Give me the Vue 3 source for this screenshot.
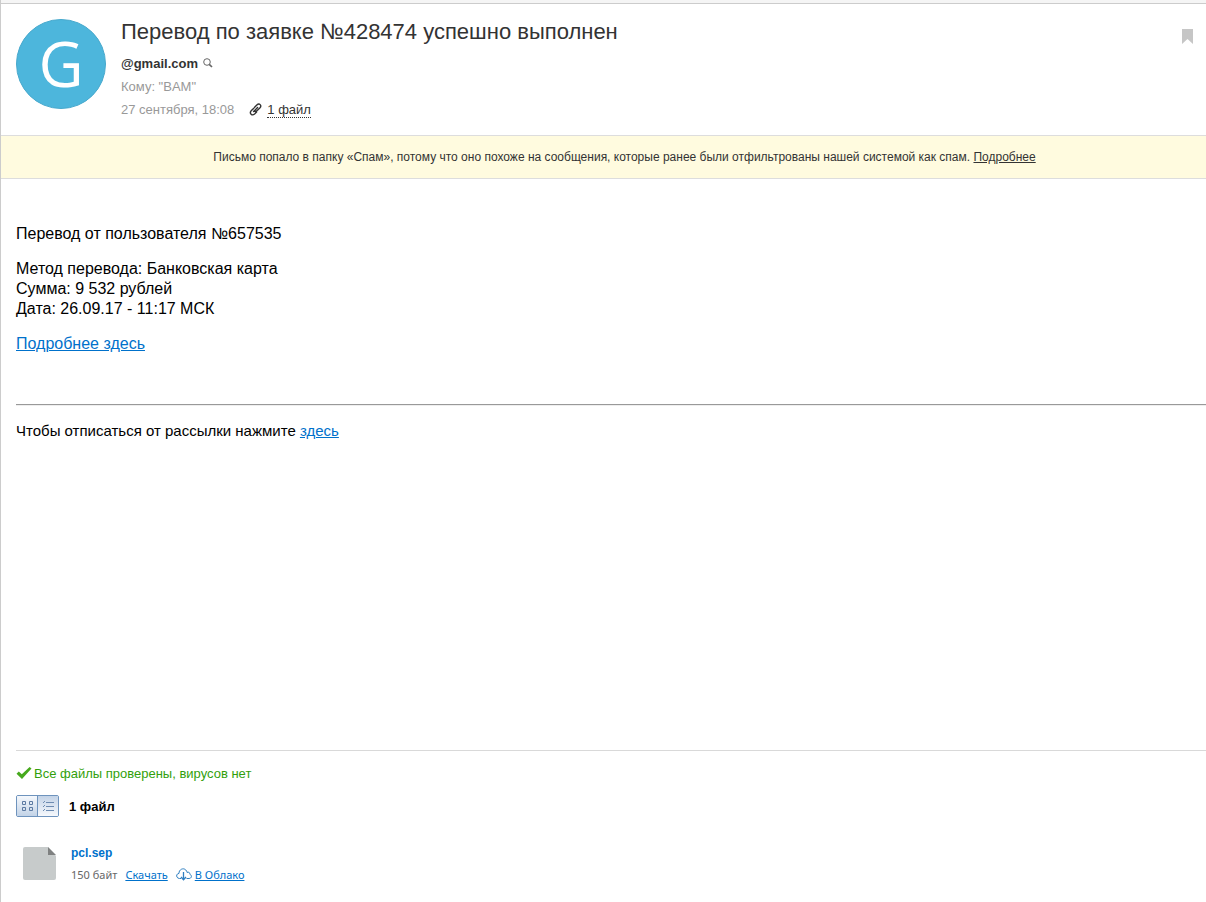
<template>
  <div class="letter">
    <header class="letter-head">
      <div class="avatar">{{ letter.initial }}</div>
      <div class="head-info">
        <h1 class="subject">{{ letter.subject }}</h1>
        <div class="head-row from">
          <span>{{ letter.from }}</span>
          <button class="icon-btn search-btn" title="Найти все письма">
            <svg width="10" height="10" viewBox="0 0 10 10" fill="none" stroke="#666">
              <circle cx="4" cy="4" r="3.3" />
              <path d="M6.2 6.4 L9 9" stroke-width="1.7" />
            </svg>
          </button>
        </div>
        <div class="head-row">Кому: "{{ letter.to }}"</div>
        <div class="head-row">
          <time>{{ letter.date }}</time>
          <svg class="clip" width="13" height="13" viewBox="0 0 13 13" fill="none" stroke="#333" stroke-width="1.4" stroke-linecap="round">
            <path d="M4.6 8.6 L8.6 4.6 M5.6 4.2 L7.8 2 C10.4 -0.4 13.2 2.4 10.8 5 L8.2 7.6 C7.2 8.6 6 8.8 5 8 M7.6 9 L5.6 11 C3 13.2 0 10.4 2.2 7.8 L4.8 5.2" />
          </svg>
          <a href="#files" class="files-link">{{ filesLabel }}</a>
        </div>
      </div>
      <button class="icon-btn flag-btn" title="Отметить флажком">
        <svg width="11" height="15" viewBox="0 0 11 15">
          <path d="M0 0 H11 V15 L5.5 10 L0 15 Z" fill="#c6c6c6" />
        </svg>
      </button>
    </header>

    <div class="notice">
      Письмо попало в папку «Спам», потому что оно похоже на сообщения, которые ранее были отфильтрованы нашей системой как спам.
      <a href="#">Подробнее</a>
    </div>

    <main class="message">
      <p>Перевод от пользователя №657535</p>
      <p>
        Метод перевода: Банковская карта<br />
        Сумма: 9 532 рублей<br />
        Дата: 26.09.17 - 11:17 МСК
      </p>
      <p><a href="#">Подробнее здесь</a></p>
      <hr />
      <p class="unsubscribe">Чтобы отписаться от рассылки нажмите <a href="#">здесь</a></p>
    </main>

    <section id="files" class="attachments">
      <div class="checked">
        <svg width="16" height="14" viewBox="0 0 16 14">
          <path d="M0.5 6.8 L2.8 4.6 L5.8 7.3 L13.6 0 L15.5 1.6 L6 12 Z" fill="#46a91d" />
        </svg>
        <span>Все файлы проверены, вирусов нет</span>
      </div>
      <div class="files-bar">
        <div class="view-toggle">
          <button :class="{ active: view === 'grid' }" title="Плиткой" @click="view = 'grid'">
            <svg width="11" height="10" viewBox="0 0 11 10" fill="none" stroke="#5d7ba3">
              <path d="M0.5 0.5h3v3h-3z M7.5 0.5h3v3h-3z M0.5 6.5h3v3h-3z M7.5 6.5h3v3h-3z" />
            </svg>
          </button>
          <button :class="{ active: view === 'list' }" title="Списком" @click="view = 'list'">
            <svg width="11" height="10" viewBox="0 0 11 10" fill="none" stroke="#6d8bb1">
              <path d="M0 1.5h1 M1 0.5h1 M3 1.5h8 M0 5.5h1 M1 4.5h1 M3 5.5h8 M0 9.5h1 M1 8.5h1 M3 9.5h8" />
            </svg>
          </button>
        </div>
        <strong>{{ filesLabel }}</strong>
      </div>
      <div v-for="f in files" :key="f.name" class="file">
        <svg width="33" height="33" viewBox="0 0 33 33">
          <path d="M2 0 H25 L33 9 V31 Q33 33 31 33 H2 Q0 33 0 31 V2 Q0 0 2 0 Z" fill="#c7cbcb" />
          <path d="M25 0 L33 8 H25 Z" fill="#7f8181" />
        </svg>
        <div class="file-info">
          <a href="#" class="file-name">{{ f.name }}</a>
          <div class="file-meta">
            <span>{{ f.size }}</span>
            <a href="#" class="download">Скачать</a>
            <svg width="16" height="13" viewBox="0 0 16 13" fill="none" stroke="#2f7fc1">
              <path d="M5 10.5 H3.5 C-0.2 10.3 -0.2 5.6 3 5.4 C2.8 1.4 7.5 -0.6 9.8 2 C10.6 2.8 11 3.4 11 4.4 C13 3.7 14 4.8 13.8 6.2 C16.4 7.5 15.6 10.5 13 10.5 H10.5" />
              <path d="M7.5 4 V12 M5 9 L7.5 11.8 L10 9" stroke-width="1.3" />
            </svg>
            <a href="#" class="cloud">В Облако</a>
          </div>
        </div>
      </div>
    </section>
  </div>
</template>

<script setup>
import { computed, ref } from 'vue'

const letter = {
  initial: 'G',
  subject: 'Перевод по заявке №428474 успешно выполнен',
  from: '@gmail.com',
  to: 'BAM',
  date: '27 сентября, 18:08'
}

const files = ref([{ name: 'pcl.sep', size: '150 байт' }])
const view = ref('grid')

const filesLabel = computed(() => `${files.value.length} файл`)
</script>

<style>
body { margin: 0; background: #fff; }
</style>

<style scoped>
.letter {
  min-height: 100vh; box-sizing: border-box;
  display: flex; flex-direction: column;
  border-left: 1px solid #ccc;
  font-family: "Liberation Sans", Arial, sans-serif; font-size: 13px; color: #333;
}
a { color: #0071cb; }
svg { display: block; flex-shrink: 0; }
.icon-btn { padding: 0; border: 0; background: none; cursor: pointer; }

.letter-head {
  display: flex; align-items: flex-start; gap: 15px;
  padding: 15px 13px 14px 15px;
  border-top: 1px solid #ccc; box-shadow: 0 -3px #f5f5f5; margin-top: 3px;
}
.avatar {
  width: 90px; height: 90px; flex-shrink: 0; border-radius: 50%; box-sizing: border-box;
  background: #4db6dc; border: 1px solid #48a9cd; color: #fff;
  font: 500 62px/86px "Open Sans", sans-serif; text-align: center;
}
.head-info { flex: 1; min-width: 0; }
.subject { margin: 0 0 6px; font-size: 22px; line-height: 26px; font-weight: normal; }
.head-row { display: flex; align-items: center; height: 23px; color: #999; }
.from { height: 24px; color: #333; font-weight: bold; }
.search-btn { margin-left: 5px; }
.clip { margin: 0 5px 0 15px; }
.files-link { color: #333; text-decoration: none; line-height: 15px; padding-top: 1px; border-bottom: 1px dotted #333; }
.flag-btn { margin-top: 10px; }

.notice {
  padding: 11px 0 11px 42px; text-align: center;
  font-size: 12px; line-height: 20px;
  background: #fffbdf; border-top: 1px solid #ddd; border-bottom: 1px solid #ddd;
}
.notice a { color: #333; }

.message { flex: 1; padding: 45px 0 45px 15px; font-size: 16px; line-height: 20px; color: #000; }
.message p { margin: 0 0 15px; }
.message hr { margin: 50px 0 15px; border: 0; border-top: 1px solid #999; border-bottom: 1px solid #eee; }
.message .unsubscribe { margin: 0; font-size: 15px; }

.attachments { margin-left: 15px; padding: 13px 0 18px; border-top: 1px solid #d9d9d9; }
.checked { display: flex; align-items: center; gap: 2px; line-height: 20px; color: #329f0b; }
.files-bar { display: flex; align-items: center; gap: 10px; margin: 11px 0 26px; color: #000; }
.view-toggle {
  display: flex; width: 43px; height: 22px; box-sizing: border-box;
  border: 1px solid #6e93bd; border-radius: 2px; overflow: hidden;
}
.view-toggle button {
  flex: 1; display: flex; align-items: center; justify-content: center;
  padding: 0; border: 0; cursor: pointer;
  background: linear-gradient(#c3d3e7, #f5f8fc);
}
.view-toggle button + button { border-left: 1px solid #6e93bd; }
.view-toggle .active { background: linear-gradient(#f5f8fc, #c3d3e7); }
.file { display: flex; align-items: center; gap: 15px; padding-left: 7px; }
.file-name { display: block; font-size: 12px; line-height: 21px; font-weight: bold; text-decoration: none; }
.file-meta {
  display: flex; align-items: center; height: 20px;
  font-family: Tahoma, "Noto Sans", sans-serif; font-size: 11px; color: #666;
}
.download { margin: 0 8px; }
.cloud { margin-left: 3px; }
</style>
